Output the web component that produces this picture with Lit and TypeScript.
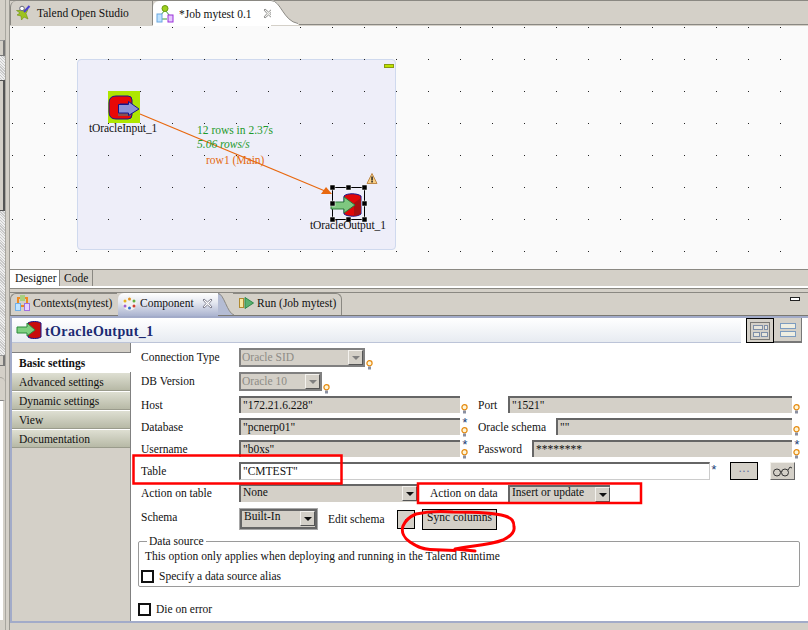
import { LitElement, html, css, svg } from 'lit';
import { customElement } from 'lit/decorators.js';

const bulb = html`<svg class="bulb" width="7" height="10" viewBox="0 0 7 10">
  <circle cx="3.500" cy="3.200" r="2.600" fill="#fff6d8" stroke="#e58a10" stroke-width="1.200"></circle>
  <rect x="2" y="6.500" width="3" height="3" fill="#8a8fa0"></rect>
</svg>`;

const arrowBtn = (off = false) => html`<span class="arrow-btn ${off ? 'off' : ''}"><i></i></span>`;

@customElement('app-root')
export class AppRoot extends LitElement {
  static styles = css`
    :host {
      display: block;
      position: relative;
      width: 808px;
      height: 630px;
      overflow: hidden;
      background: #d4d0c8;
      color: #111;
      font: 11.5px/16px 'Liberation Serif', serif;
      white-space: nowrap;
    }
    svg { flex: none; }
    .page { display: flex; height: 630px; }

    /* left trim */
    .trim { width: 10px; flex: none; display: flex; flex-direction: column; border-right: 1px solid #9a9892; box-sizing: border-box; position: relative; }
    .trim::after { content: ''; position: absolute; left: 5px; top: 0; bottom: 0; width: 1px; background: #a8a69f; }
    .trim div { width: 5px; box-sizing: border-box; }
    .t-gap1 { height: 40px; }
    .t-btn { height: 16px; background: #d4d0c8; border-right: 2px solid #777; border-top: 1px solid #999; border-bottom: 1px solid #777; }
    .t-btn.small { height: 11px; }
    .t-dots { background: repeating-linear-gradient(45deg, #eee 0 1px, #c8c8c8 1px 2px); }
    .t-dots.a { height: 24px; }
    .t-bar { height: 131px; background: #d4d0c8; border-right: 2px solid #555; border-top: 1px solid #555; border-bottom: 1px solid #555; }
    .t-dots.b { height: 144px; }
    .t-gap2 { height: 11px; }
    .t-tab { height: 23px; border-top: 1px solid #a8a69f; border-top-right-radius: 5px; }
    .t-white { height: 220px; background: #fff; border-top: 1px solid #888; border-right: 2px solid #d4d0c8; }

    .main { flex: 1; min-width: 0; display: flex; flex-direction: column; }

    /* editor folder */
    .ed-tabs { height: 26px; display: flex; box-sizing: border-box; border-top: 1px solid #8a8882; position: relative; }
    .ed-tab { height: 24px; display: flex; align-items: center; gap: 6px; padding: 0 0 0 4px; box-sizing: border-box; flex: none; }
    .ed-tab.first { width: 143px; border-left: 1px solid #8a8882; border-top-left-radius: 6px; border-right: 1px solid #8a8882; }
    .ed-tab.active { background: #fff; width: 118px; height: 25px; border-top-left-radius: 6px; gap: 5px; padding-left: 3px; }
    .ed-close { margin-left: 6px; }
    .ed-curve { margin-top: -1px; }
    .ed-line { flex: 1; align-self: flex-end; height: 1px; margin-bottom: 1px; background: #8a8882; }
    .canvas { height: 243px; position: relative; background: #fafafa; }
    .canvas svg.layer { position: absolute; left: 0; top: 0; }
    .subjob { position: absolute; left: 67px; top: 33px; width: 319px; height: 191px; box-sizing: border-box; background: #eeeef9; border: 1px solid #cfd9ee; border-radius: 4px; }
    .mini { position: absolute; right: 1px; top: 4px; width: 10px; height: 4px; box-sizing: border-box; background: #bde300; border: 1px solid #8a9a10; }
    .node-label { position: absolute; letter-spacing: -0.1px; }
    .lbl-green { position: absolute; color: #1e9a2c; }
    .lbl-orange { position: absolute; color: #e4690f; }
    .lbl-green.rate { font-style: italic; }

    .ed-bottom { height: 17px; box-sizing: border-box; border-top: 1px solid #8a8882; display: flex; }
    .ed-bottom span { height: 16px; display: flex; align-items: center; box-sizing: border-box; }
    .ed-bottom .on { background: #fff; width: 50px; padding-left: 5px; border-right: 1px solid #8a8882; }
    .ed-bottom .off { width: 33px; padding-left: 4px; border-right: 1px solid #8a8882; }
    .white-line { height: 2px; background: #fff; }

    /* view folder */
    .view-tabs { height: 28px; flex: none; box-sizing: border-box; position: relative; border-top: 1px solid #8a8882; padding-top: 3px; display: flex; align-items: stretch; }
    .view-tabs::before { content: ''; position: absolute; left: 0; right: 0; top: 3px; height: 1px; background: #8a8882; }
    .view-tabs::after { content: ''; position: absolute; left: 0; right: 0; bottom: 0; height: 1px; background: #7a7872; }
    .v-tab { position: relative; z-index: 1; display: flex; align-items: center; gap: 4px; box-sizing: border-box; background: #d4d0c8; padding-bottom: 3px; flex: none; }
    .v-tab.ctx { width: 107px; padding-left: 4px; border-left: 1px solid #8a8882; border-top: 1px solid #8a8882; border-top-left-radius: 6px; margin-top: 1px; margin-bottom: 1px; gap: 3px; }
    .v-tab.cmp { width: 100px; padding-left: 4px; margin-top: 1px; gap: 3px; margin-left: 1px; background: linear-gradient(#fff, #e6e9f1 40%, #aab3cf); border-top-left-radius: 6px; }
    .v-tab.cmp .ed-close { margin-left: 5px; }
    .v-tab.run { width: 109px; padding-left: 6px; margin-left: -1px; margin-top: 1px; gap: 3px; border-top: 1px solid #8a8882; border-right: 1px solid #8a8882; border-top-right-radius: 6px; margin-bottom: 1px; }
    .v-curve { position: relative; z-index: 2; margin-top: 1px; }
    .v-min { position: absolute; right: 8px; top: 8px; width: 10px; height: 4px; box-sizing: border-box; background: #fff; border: 1px solid #222; z-index: 1; }

    .panel { flex: 1; display: flex; flex-direction: column; border-left: 2px solid #a2abc9; border-top: 2px solid #a2abc9; border-bottom: 2px solid #a2abc9; margin-bottom: 7px; background: #fff; min-height: 0; }
    .head { height: 25px; flex: none; display: flex; background: #fff; }
    .head-title { width: 729px; height: 25px; box-sizing: border-box; display: flex; align-items: center; gap: 3px; padding: 4px 0 0 4px; background: linear-gradient(#fff, #e7ebf1); border-bottom: 1px solid #bcc4d8; }
    .head-title svg { margin-top: -4px; }
    .head-title b { font-size: 14px; color: #1b2a72; letter-spacing: 0.4px; }
    .head-tools { flex: 1; display: flex; background: #fff; padding-left: 5px; }
    .tool { width: 28px; height: 25px; box-sizing: border-box; background: #d4d0c8; border-right: 1px solid #777; border-bottom: 2px solid #777; display: flex; align-items: center; justify-content: center; }
    .tool.on { border: 1px solid #000; }
    .tool svg { margin-top: 0; }

    .body { flex: 1; display: flex; min-height: 0; }
    .nav { width: 119px; flex: none; box-sizing: border-box; padding-top: 9px; background: #d4d0c8; border-right: 1px solid #808080; }
    .nav div { height: 19px; box-sizing: border-box; padding: 0 0 0 7px; display: flex; align-items: center; background: linear-gradient(#dedfd2, #b7b9a6); border-bottom: 1px solid #9a9b8c; border-top: 1px solid #fff; }
    .nav div.on { background: #fff; border-top: 1px solid #808080; font-weight: bold; border-bottom: 0; height: 20px; margin-right: -1px; position: relative; }

    .form { flex: 1; min-width: 0; box-sizing: border-box; padding: 5px 8px 0 10px; background: #fff; }
    .row { display: flex; align-items: flex-start; }
    .h24 { height: 24px; }
    .h22 { height: 22px; }
    .h27 { height: 27px; }
    .lab { width: 98px; flex: none; line-height: 19px; }
    .fld { height: 17px; box-sizing: border-box; background: #d4d0c8; border-top: 2px solid #666; border-left: 2px solid #666; padding-left: 2px; line-height: 15px; overflow: hidden; }
    .fld.l { width: 221px; flex: none; }
    .fld.r { flex: 1; min-width: 0; }
    .fld.table { background: #fff; height: 18px; width: 471px; flex: none; border-right: 1px solid #ccc; border-bottom: 1px solid #ccc; line-height: 15px; }
    .marks { width: 18px; flex: none; height: 20px; display: flex; flex-direction: column; align-items: flex-start; padding: 2px 0 0 1px; box-sizing: border-box; color: #1d3f78; line-height: 8px; font-size: 13px; }
    .marks.end { width: 8px; }
    .marks.low { padding-top: 8px; }
    .marks.beside { margin-top: 10px; }
    .marks span { height: 7px; display: block; font-family: 'Liberation Mono', monospace; }
    .gap-lab { line-height: 19px; flex: none; }
    .gap-lab.w30 { width: 30px; }
    .gap-lab.w54 { width: 54px; }
    .gap-lab.w78 { width: 78px; }
    .gap-lab.data { margin-left: 13px; width: 78px; }
    .gap-lab.edit { margin-left: 11px; width: 69px; margin-top: 2px; }
    .combo { height: 18px; box-sizing: border-box; background: #d4d0c8; display: flex; align-items: flex-start; padding-left: 2px; line-height: 14px; flex: none; }
    .combo span.t { flex: 1; }
    .combo.dis { border: 2px solid #808080; height: 19px; padding-left: 1px; color: #8e8c86; }
    .combo.plain { border-top: 2px solid #666; border-left: 2px solid #666; line-height: 12px; }
    .combo.schema { height: 20px; border: 2px solid #666; outline: 1px solid #a8a8a8; width: 77px; margin-left: 1px; margin-top: 1px; line-height: 11px; }
    .w126 { width: 126px; }
    .w83 { width: 83px; }
    .w178 { width: 178px; }
    .combo.w102 { width: 102px; margin-top: 1px; line-height: 10px; }
    .arrow-btn { width: 15px; height: 15px; flex: none; box-sizing: border-box; background: #d4d0c8; border: 1px solid; border-color: #f4f2ee #555 #555 #f4f2ee; display: flex; align-items: center; justify-content: center; }
    .arrow-btn i { width: 0; height: 0; border: 4px solid transparent; border-top: 4px solid #111; border-bottom: 0; }
    .arrow-btn.off i { border-top-color: #808080; }
    .btn { box-sizing: border-box; background: #d4d0c8; border: 1px solid #000; display: flex; align-items: center; justify-content: center; flex: none; }
    .btn.dots { width: 28px; height: 18px; color: #5a6a9a; }
    .btn.glass { width: 25px; height: 18px; border: 1px solid; border-color: #f2f0ea #666 #666 #f2f0ea; margin-left: 12px; }
    .btn.edit { width: 18px; height: 19px; margin-top: 2px; }
    .btn.sync { width: 75px; height: 21px; margin-left: 7px; margin-top: 1px; line-height: 15px; align-items: flex-start; }
    .star { width: 20px; flex: none; color: #1d3f78; font-family: 'Liberation Mono', monospace; font-size: 13px; line-height: 17px; }

    fieldset { margin: 2px 0 0 -3px; padding: 0 0 0 2px; height: 50px; width: 662px; box-sizing: border-box; border: 1px solid #9a9a9a; border-radius: 2px; }
    legend { padding: 0 2px; margin-left: 6px; line-height: 8px; height: 8px; }
    .info { line-height: 16px; margin: 3px 0 0 4px; letter-spacing: 0.05px; }
    .check { display: flex; align-items: center; gap: 5px; line-height: 13px; height: 13px; }
    .check i { width: 13px; height: 13px; box-sizing: border-box; border: 2px solid #111; background: #fff; display: block; flex: none; }
    .die { margin: 16px 0 0 -3px; }
    .spec { margin-top: 6px; }

    .marks-overlay { position: absolute; left: 0; top: 0; pointer-events: none; z-index: 5; }
  `;

  render() {
    return html`
      <div class="page">
        <div class="trim">
          <div class="t-gap1"></div>
          <div class="t-btn"></div>
          <div class="t-dots a"></div>
          <div class="t-bar"></div>
          <div class="t-dots b"></div>
          <div class="t-btn small"></div>
          <div class="t-gap2"></div>
          <div class="t-tab"></div>
          <div class="t-white"></div>
        </div>
        <div class="main">
          ${this.editorTabs()}
          ${this.canvas()}
          <div class="ed-bottom"><span class="on">Designer</span><span class="off">Code</span></div>
          <div class="white-line"></div>
          ${this.viewTabs()}
          <div class="panel">
            <div class="head">
              <div class="head-title">
                ${this.outputIcon()}
                <b>tOracleOutput_1</b>
              </div>
              <div class="head-tools">
                <div class="tool on">
                  <svg width="22" height="20" viewBox="0 0 22 20">
                    <rect x="1.500" y="1.500" width="19" height="17" fill="none" stroke="#222" stroke-dasharray="1 1"></rect>
                    <rect x="4.500" y="4.500" width="9" height="4" fill="#e8e6dc" stroke="#7f8fa8"></rect>
                    <rect x="15.500" y="4.500" width="3" height="4" fill="#e8e6dc" stroke="#7f8fa8"></rect>
                    <rect x="4.500" y="11.500" width="6" height="4" fill="#e8e6dc" stroke="#7f8fa8"></rect>
                    <rect x="12.500" y="11.500" width="6" height="4" fill="#e8e6dc" stroke="#7f8fa8"></rect>
                  </svg>
                </div>
                <div class="tool">
                  <svg width="18" height="16" viewBox="0 0 18 16">
                    <rect x="1.500" y="1.500" width="15" height="5" fill="#efeee2" stroke="#7d9cc0"></rect>
                    <rect x="1.500" y="9.500" width="15" height="5" fill="#efeee2" stroke="#7d9cc0"></rect>
                  </svg>
                </div>
              </div>
            </div>
            <div class="body">
              <div class="nav">
                <div class="on">Basic settings</div>
                <div>Advanced settings</div>
                <div>Dynamic settings</div>
                <div>View</div>
                <div>Documentation</div>
              </div>
              ${this.form()}
            </div>
          </div>
        </div>
      </div>
      <svg class="marks-overlay" width="808" height="630" fill="none" stroke="#f00">
        <rect x="133.500" y="455.500" width="208" height="28" stroke-width="2.500"></rect>
        <rect x="418" y="483.500" width="223" height="19.500" stroke-width="2.500"></rect>
        <path stroke-width="3" stroke-linecap="round" stroke-linejoin="round"
          d="M475 551 L455 549 C470 546 490 545 503 540 C511 536 515 532 514 527 C514 521 512 518 505 516 C495 513 475 512 453 512 C440 511 425 512 416 514 C409 517 405 521 403 526 C401 532 404 538 410 542 C416 546 421 549 430 549.500 L455 550.500"></path>
      </svg>
    `;
  }

  editorTabs() {
    return html`
      <div class="ed-tabs">
        <div class="ed-tab first">
          <svg width="16" height="16" viewBox="0 0 16 16">
            <path d="M6 2.500 C8 1.500 9 3.500 9 5 L13 4.500 L11 8.500 L13 14 L9 12 L6.500 15 L6 11 L2 10 L5 8 L1.500 5.500 L5 5.500 Z" fill="#9dc31f" stroke="#6f8f10" stroke-width=".6"></path>
            <circle cx="7" cy="3.500" r="2.300" fill="#fff" stroke="#667"></circle>
            <path d="M9 7 L14.500 1" stroke="#4a3fd0" stroke-width="2"></path>
          </svg>
          <span>Talend Open Studio</span>
        </div>
        <div class="ed-tab active">
          <svg width="18" height="18" viewBox="0 0 18 18">
            <path d="M9 5 L4 11 M9 5 L14 11 M6 14 H11" stroke="#3a9a3a" fill="none"></path>
            <circle cx="9" cy="3.500" r="3" fill="#9fd020" stroke="#6a9a10"></circle>
            <rect x="1" y="9" width="5" height="8" fill="#bfe2ff" stroke="#6aa8e0"></rect>
            <rect x="12" y="10" width="5" height="7" fill="#e6c8ff" stroke="#9a30d8"></rect>
          </svg>
          <span>*Job mytest 0.1</span>
          <svg class="ed-close" width="11" height="11" viewBox="0 0 11 11">
            <path d="M1 2 L2 1 L5.500 4 L9 1 L10 2 L7 5.500 L10 9 L9 10 L5.500 7 L2 10 L1 9 L4 5.500 Z" fill="#f2f2ee" stroke="#777" stroke-width=".8"></path>
          </svg>
        </div>
        <svg class="ed-curve" width="28" height="26" viewBox="0 0 28 26">
          <path d="M0 0 C10 0 12 21 27 23 V25 H0 Z" fill="#fff"></path>
          <path d="M0 .5 C10 .5 12 21 27 23.500" fill="none" stroke="#8a8882"></path>
        </svg>
        <div class="ed-line"></div>
      </div>
    `;
  }

  canvas() {
    return html`
      <div class="canvas">
        <div class="subjob"><div class="mini"></div></div>
        <svg class="layer" width="798" height="243" viewBox="0 0 798 243">
          <defs>
            <pattern id="dots" width="32" height="32" patternUnits="userSpaceOnUse">
              <rect x="2" y="1" width="1" height="1" fill="#222"></rect>
            </pattern>
          </defs>
          <rect width="798" height="243" fill="url(#dots)"></rect>
          <path d="M130 88 L315 165" stroke="#e8680f" stroke-width="1.200" fill="none"></path>
          <path d="M322 168 L311 168 L316 161 Z" fill="#e8680f"></path>
          <g transform="translate(98 65)">
            <rect width="32" height="32" fill="#aee600"></rect>
            ${this.inputShape()}
          </g>
          <g transform="translate(322 161)">
            <rect x=".5" y=".5" width="32" height="32" fill="none" stroke="#000"></rect>
            ${this.cylinder(10, 6)}
            ${[[0, 0], [16, 0], [32, 0], [0, 16], [32, 16], [0, 32], [16, 32], [32, 32]].map(
              ([x, y]) => svg`<rect x=${x - 2} y=${y - 2} width="5" height="5" fill="#000" stroke="#fff" stroke-width=".5"></rect>`
            )}
          </g>
          <g transform="translate(357 147)">
            <path d="M5 .5 L10 10.500 H0 Z" fill="#f8cf86" stroke="#c08a4a" stroke-linejoin="round"></path>
            <rect x="4.300" y="3.500" width="1.500" height="4" fill="#222"></rect>
            <rect x="4.300" y="8" width="1.500" height="1.500" fill="#222"></rect>
          </g>
        </svg>
        <span class="node-label" style="left:79px;top:94px">tOracleInput_1</span>
        <span class="lbl-green" style="left:187px;top:96px">12 rows in 2.37s</span>
        <span class="lbl-green rate" style="left:187px;top:110px">5.06 rows/s</span>
        <span class="lbl-orange" style="left:196px;top:126px">row1 (Main)</span>
        <span class="node-label" style="left:300px;top:191px">tOracleOutput_1</span>
      </div>
    `;
  }

  inputShape() {
    return svg`
      <path d="M8 5 H20 Q24 5 24 9 V13 H12 V22 H24 V24 Q24 28 20 28 H8 Q1 28 1 21 V12 Q1 5 8 5 Z" fill="#e80808" stroke="#14148c"></path>
      <path d="M10 22 H23 V25 H10 Z" fill="#8a5050"></path>
      <path d="M10.500 13.500 H20.500 V10.500 L31 18 L20.500 24.500 V22 H10.500 Z" fill="#8c92d8" stroke="#14148c"></path>
    `;
  }

  cylinder(x: number, y: number) {
    return svg`
      <g transform="translate(${x} ${y})">
        <path d="M2 3 C5 0 15 0 19 3 V21 C15 24 6 24 2 21 Z" fill="#e00808" stroke="#14148c"></path>
        <path d="M12 10 L19 5 V20 C17 22 14 23 12 23 Z" fill="#a81010"></path>
        <path d="M-11 9 H2 V4 L13 12 L2 20 V16 H-11 Z" fill="#7fc880" stroke="#2a7a3a"></path>
      </g>
    `;
  }

  outputIcon() {
    return html`<svg width="26" height="18" viewBox="0 0 26 18">
      <path d="M12 2 C15 0 22 0 25 2 V16 C22 18 15 18 12 16 Z" fill="#c80c0c" stroke="#14148c"></path>
      <path d="M1 6 H11 V2 L19 9 L11 15 V12 H1 Z" fill="#7fd080" stroke="#2a8a3a"></path>
    </svg>`;
  }

  viewTabs() {
    return html`
      <div class="view-tabs">
        <div class="v-tab ctx">
          <svg width="15" height="16" viewBox="0 0 15 16">
            <rect x="3" y="3" width="9" height="8" fill="none" stroke="#f08a20" stroke-width="2"></rect>
            <rect x="5" y="0" width="5" height="6" fill="#a8d080"></rect>
            <rect x="0.500" y="8.500" width="5" height="7" fill="#c0e4ff" stroke="#70b0e8"></rect>
            <rect x="9.500" y="8.500" width="5" height="7" fill="#e8d0ff" stroke="#a070e0"></rect>
          </svg>
          <span>Contexts(mytest)</span>
        </div>
        <div class="v-tab cmp">
          <svg width="15" height="15" viewBox="0 0 15 15">
            <circle cx="7.500" cy="7.500" r="7" fill="#f2f2f0"></circle>
            <circle cx="3" cy="5" r="1.500" fill="#e8b020"></circle>
            <circle cx="7.500" cy="3" r="1.500" fill="#e09020"></circle>
            <circle cx="12" cy="5" r="1.500" fill="#60b040"></circle>
            <circle cx="3" cy="10" r="1.500" fill="#a060d0"></circle>
            <circle cx="7.500" cy="12" r="1.500" fill="#3070d0"></circle>
            <circle cx="12" cy="10" r="1.500" fill="#d04030"></circle>
          </svg>
          <span>Component</span>
          <svg class="ed-close" width="11" height="11" viewBox="0 0 11 11">
            <path d="M1 2 L2 1 L5.500 4 L9 1 L10 2 L7 5.500 L10 9 L9 10 L5.500 7 L2 10 L1 9 L4 5.500 Z" fill="#fff" stroke="#667" stroke-width=".8"></path>
          </svg>
        </div>
        <svg class="v-curve" width="16" height="23" viewBox="0 0 16 23">
          <path d="M0 0 C6 0 9 20 16 22 H0 Z" fill="#b4bcd4"></path>
          <path d="M0 .5 C6 .5 9 20 16 22" fill="none" stroke="#8a8882"></path>
        </svg>
        <div class="v-tab run">
          <svg width="15" height="12" viewBox="0 0 15 12">
            <rect x=".5" y="1.500" width="4" height="9" fill="#f6e7a0" stroke="#b08a30"></rect>
            <path d="M6 .5 L14.500 6 L6 11.500 Z" fill="#58b070" stroke="#2f8a4a"></path>
          </svg>
          <span>Run (Job mytest)</span>
        </div>
        <div class="v-min"></div>
      </div>
    `;
  }

  form() {
    const star = html`<span>*</span>`;
    return html`
      <div class="form">
        <div class="row h24">
          <span class="lab">Connection Type</span>
          <div class="combo dis w126"><span class="t">Oracle SID</span>${arrowBtn(true)}</div>
          <div class="marks end beside">${bulb}</div>
        </div>
        <div class="row h24">
          <span class="lab">DB Version</span>
          <div class="combo dis w83"><span class="t">Oracle 10</span>${arrowBtn(true)}</div>
          <div class="marks end beside">${bulb}</div>
        </div>
        <div class="row h22">
          <span class="lab">Host</span>
          <div class="fld l">"172.21.6.228"</div>
          <div class="marks low">${bulb}</div>
          <span class="gap-lab w30">Port</span>
          <div class="fld r">"1521"</div>
          <div class="marks end low">${bulb}</div>
        </div>
        <div class="row h22">
          <span class="lab">Database</span>
          <div class="fld l">"pcnerp01"</div>
          <div class="marks">${star}${bulb}</div>
          <span class="gap-lab w78">Oracle schema</span>
          <div class="fld r">""</div>
          <div class="marks end low">${bulb}</div>
        </div>
        <div class="row h22">
          <span class="lab">Username</span>
          <div class="fld l">"b0xs"</div>
          <div class="marks">${star}${bulb}</div>
          <span class="gap-lab w54">Password</span>
          <div class="fld r">********</div>
          <div class="marks end">${star}${bulb}</div>
        </div>
        <div class="row h22">
          <span class="lab">Table</span>
          <div class="fld table">"CMTEST"</div>
          <div class="star">*</div>
          <div class="btn dots">···</div>
          <div class="btn glass">
            <svg width="21" height="12" viewBox="0 0 21 12" fill="none" stroke="#333">
              <circle cx="5" cy="7.500" r="3.500"></circle>
              <circle cx="13" cy="7.500" r="3.500"></circle>
              <path d="M8.500 7 C9 6 9 6 9.500 7 M16 5 L18 2 L20 3"></path>
            </svg>
          </div>
        </div>
        <div class="row h24">
          <span class="lab">Action on table</span>
          <div class="combo plain w178"><span class="t">None</span>${arrowBtn()}</div>
          <span class="gap-lab data">Action on data</span>
          <div class="combo plain w102"><span class="t">Insert or update</span>${arrowBtn()}</div>
        </div>
        <div class="row h27">
          <span class="lab">Schema</span>
          <div class="combo schema"><span class="t">Built-In</span>${arrowBtn()}</div>
          <span class="gap-lab edit">Edit schema</span>
          <div class="btn edit"><svg width="4" height="4"><rect x="1" y="1" width="1" height="1" fill="#44c"></rect></svg></div>
          <div class="btn sync">Sync columns</div>
        </div>
        <fieldset>
          <legend>Data source</legend>
          <p class="info">This option only applies when deploying and running in the Talend Runtime</p>
          <div class="check spec"><i></i><span>Specify a data source alias</span></div>
        </fieldset>
        <div class="check die"><i></i><span>Die on error</span></div>
      </div>
    `;
  }
}
